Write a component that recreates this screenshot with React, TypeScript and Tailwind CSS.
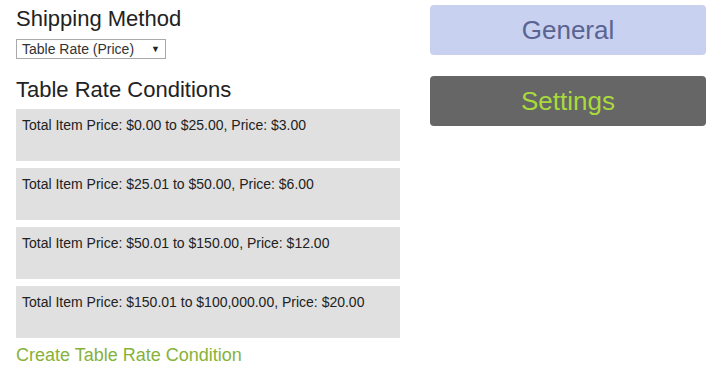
export default function App() {
  const rows = [
    "Total Item Price: $0.00 to $25.00, Price: $3.00",
    "Total Item Price: $25.01 to $50.00, Price: $6.00",
    "Total Item Price: $50.01 to $150.00, Price: $12.00",
    "Total Item Price: $150.01 to $100,000.00, Price: $20.00",
  ];
  return (
    <div className="w-[726px] h-[392px] bg-white flex gap-[30px] pl-[16px] font-['Liberation_Sans',Arial,sans-serif] text-[#222]">
      <div className="w-[384px] flex flex-col">
        <h2 className="mt-[6px] text-[22px] leading-[25px]">Shipping Method</h2>
        <div className="mt-[8px] w-[150px] h-[20px] border border-[#a9a9a9] flex items-center justify-between pl-[5px] pr-[5px] text-[14px] leading-[16px] text-[#333]">
          <span>Table Rate (Price)</span>
          <span className="text-[9px] text-[#222]">▼</span>
        </div>
        <h2 className="mt-[18px] text-[22px] leading-[25px]">Table Rate Conditions</h2>
        <div className="mt-[7px] flex flex-col gap-[7px]">
          {rows.map((r) => (
            <div key={r} className="h-[52px] bg-[#e0e0e0] pl-[6px] pt-[8px] text-[14px] leading-[16px] text-[#222]">
              {r}
            </div>
          ))}
        </div>
        <div className="mt-[7px] text-[18px] leading-[21px] text-[#86b23a]">Create Table Rate Condition</div>
      </div>
      <div className="w-[276px] flex flex-col pt-[5px] gap-[21px]">
        <div className="h-[50px] rounded-[4px] bg-[#c8d1ef] flex items-center justify-center text-[26px] text-[#5a6391]">General</div>
        <div className="h-[50px] rounded-[4px] bg-[#666666] flex items-center justify-center text-[26px] text-[#a8da3c]">Settings</div>
      </div>
    </div>
  );
}
